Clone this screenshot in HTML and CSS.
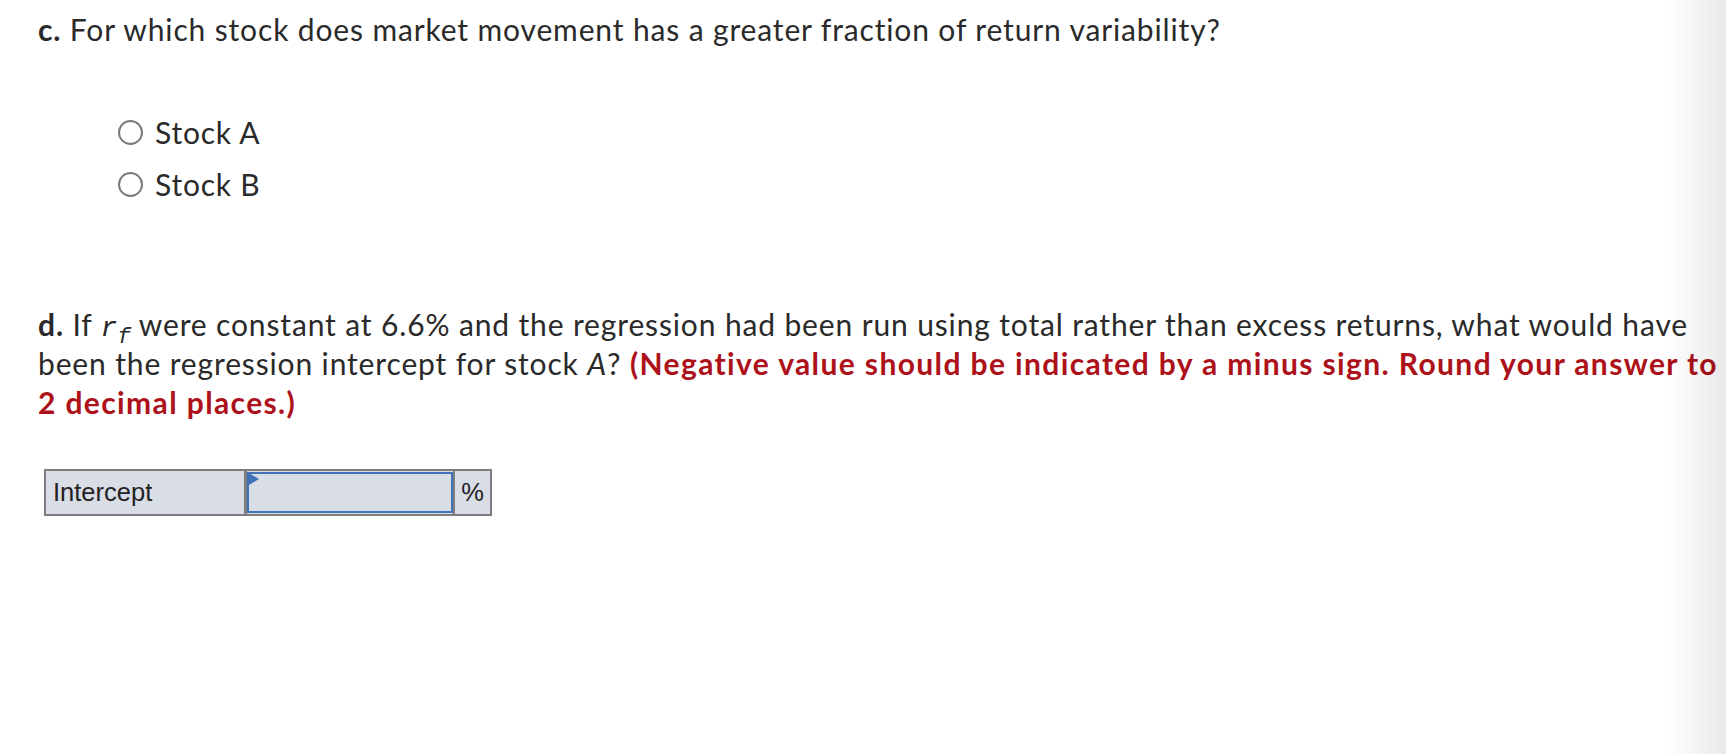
FILE: index.html
```html
<!DOCTYPE html>
<html>
<head>
<meta charset="utf-8">
<link rel="stylesheet" href="styles.css">
</head>
<body>
<main class="page">
  <section class="part part-c">
    <p class="question"><b>c.</b> For which stock does market movement has a greater fraction of return variability?</p>
    <div class="choices">
      <label class="choice"><span class="radio"></span><span class="choice-text">Stock A</span></label>
      <label class="choice"><span class="radio"></span><span class="choice-text">Stock B</span></label>
    </div>
  </section>
  <section class="part part-d">
    <p class="question"><b>d.</b> If <span class="math">r<sub>f</sub></span> were constant at 6.6% and the regression had been run using total rather than excess returns, what would have been the regression intercept for stock <i>A</i>? <strong class="note">(Negative value should be indicated by a minus sign. Round your answer to 2 decimal places.)</strong></p>
    <div class="answer-table">
      <div class="cell label-cell">Intercept</div>
      <div class="cell input-cell"><span class="flag"></span></div>
      <div class="cell unit-cell">%</div>
    </div>
  </section>
</main>
<div class="edge-shadow"></div>
</body>
</html>
```

FILE: styles.css
```css
html, body {
  margin: 0;
  padding: 0;
  background: #ffffff;
}

body {
  font-family: "Lato", "Open Sans", sans-serif;
  color: #2a2a2a;
  width: 1726px;
  height: 754px;
  overflow: hidden;
}

.page {
  padding: 10px 0 0 38px;
}

.question {
  margin: 0;
  font-size: 30px;
  letter-spacing: 0.86px;
  line-height: 39px;
}

.question b {
  font-weight: 700;
}

.choices {
  display: flex;
  flex-direction: column;
  gap: 15px;
  padding: 65px 0 0 80px;
}

.choice {
  display: flex;
  align-items: center;
  gap: 12px;
  font-size: 30px;
  letter-spacing: 0.8px;
  line-height: 37px;
}

.radio {
  width: 21px;
  height: 21px;
  border: 2px solid #7a7a7a;
  border-radius: 50%;
  box-sizing: content-box;
  flex: none;
}

.part-d {
  padding-top: 102px;
}

.part-d .question {
  width: 1700px;
}

.math {
  font-family: "Liberation Mono", "DejaVu Sans Mono", monospace;
  font-style: italic;
  font-size: 28px;
  letter-spacing: 0;
  line-height: 1;
}

.math sub {
  font-size: 0.8em;
  vertical-align: -0.3em;
  line-height: 0;
}

.note {
  color: #ad1119;
  font-weight: 700;
  letter-spacing: 1.38px;
}

.answer-table {
  display: flex;
  margin: 47px 0 0 6px;
  width: 448px;
  height: 47px;
  border: 2px solid #7d7d7d;
  box-sizing: border-box;
  background: #d9dde6;
  font-family: "Liberation Sans", Arial, sans-serif;
  font-size: 25.5px;
  color: #222;
}

.cell {
  display: flex;
  align-items: center;
}

.label-cell {
  width: 201px;
  padding-left: 7px;
  box-sizing: border-box;
  border-right: 3px solid #7d7d7d;
}

.input-cell {
  position: relative;
  width: 206px;
  border: 2px solid #3f72b8;
  box-sizing: border-box;
  margin: 1px 0;
}

.flag {
  position: absolute;
  left: 0;
  top: 0;
  width: 0;
  height: 0;
  border-top: 6px solid transparent;
  border-bottom: 6px solid transparent;
  border-left: 10px solid #3f72b8;
  transform: translateY(-1px);
}

.unit-cell {
  flex: 1;
  justify-content: center;
  border-left: 2px solid #7d7d7d;
}

.edge-shadow {
  position: fixed;
  top: 0;
  right: 0;
  width: 60px;
  height: 100%;
  background: linear-gradient(to right, rgba(0,0,0,0), rgba(0,0,0,0.085));
  pointer-events: none;
}
```
